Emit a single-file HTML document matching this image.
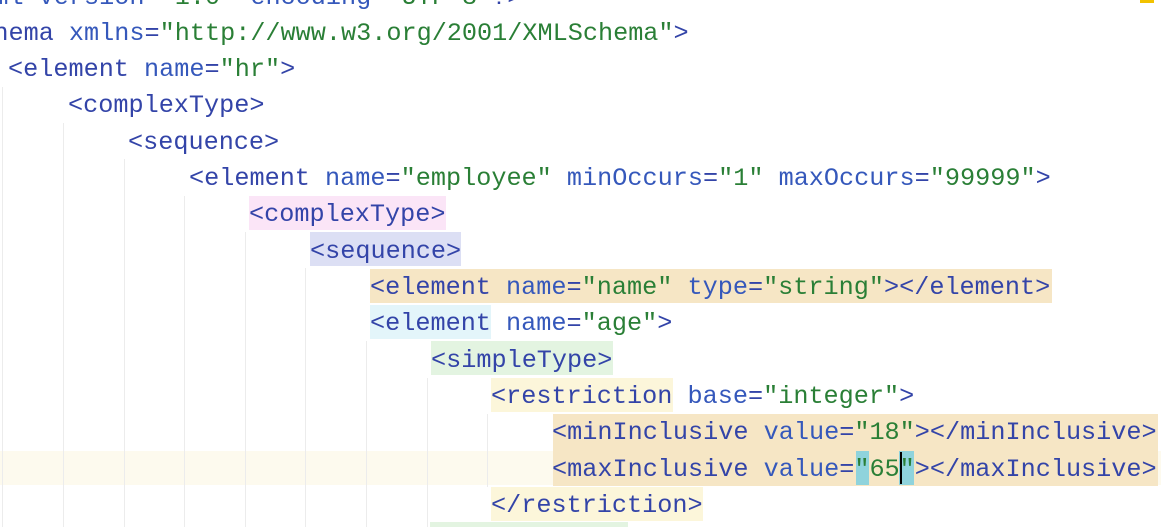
<!DOCTYPE html><html><head><style>
html{overflow:hidden;height:527px}
body{margin:0;width:1161px;height:527px;overflow:hidden;background:#fff;position:relative;font-family:"Liberation Mono","Courier New",monospace;font-size:25.2px}
.l{position:absolute;left:0;height:36.3px;line-height:36.3px;white-space:pre;color:#3344a8}
.v{color:#2a7f36}.a{color:#3558bb}
.h{position:absolute;height:34px}
.g{position:absolute;width:1px;background:#ececec}
</style></head><body>
<div class="h" style="left:0;top:451px;width:1161px;background:#fdfaee"></div>
<div class="h" style="left:249px;top:196px;width:197px;background:#fbe5f7"></div>
<div class="h" style="left:310px;top:232px;width:151px;background:#dcdff4"></div>
<div class="h" style="left:370px;top:269px;width:682px;background:#f6e6c5"></div>
<div class="h" style="left:370px;top:305px;width:121px;background:#e3f5fa"></div>
<div class="h" style="left:431px;top:341px;width:182px;background:#e3f4e1"></div>
<div class="h" style="left:491px;top:378px;width:182px;background:#fcf6da"></div>
<div class="h" style="left:553px;top:414px;width:605px;height:72px;background:#f6e6c5"></div>
<div class="h" style="left:491px;top:487px;width:212px;background:#fcf6da"></div>
<div class="h" style="left:430px;top:522px;width:198px;height:5px;background:#e3f4e1"></div>
<div class="h" style="left:856px;top:451px;width:13px;background:#8fd3dc"></div>
<div class="h" style="left:899px;top:451px;width:15px;background:#8fd3dc"></div>
<div style="position:absolute;left:900px;top:452px;width:2px;height:32px;background:#000"></div>
<div style="position:absolute;left:1140px;top:0;width:14px;height:3px;background:#f2c200"></div>
<div class="g" style="left:2px;top:87px;height:440px"></div>
<div class="g" style="left:63px;top:123px;height:404px"></div>
<div class="g" style="left:124px;top:159px;height:368px"></div>
<div class="g" style="left:184px;top:196px;height:331px"></div>
<div class="g" style="left:245px;top:232px;height:295px"></div>
<div class="g" style="left:305px;top:268px;height:259px"></div>
<div class="g" style="left:366px;top:341px;height:186px"></div>
<div class="g" style="left:427px;top:378px;height:149px"></div>
<div class="g" style="left:487px;top:414px;height:73px"></div>
<div class="l" style="top:-20px;left:-52px">&lt;?<span class="a">xml version</span>=<span class="v">"1.0"</span> <span class="a">encoding</span>=<span class="v">"UTF-8"</span>?&gt;</div>
<div class="l" style="top:16px;left:-52px">&lt;schema <span class="a">xmlns</span>=<span class="v">"http://www.w3.org/2001/XMLSchema"</span>&gt;</div>
<div class="l" style="top:52px;left:8px">&lt;element <span class="a">name</span>=<span class="v">"hr"</span>&gt;</div>
<div class="l" style="top:88px;left:68px">&lt;complexType&gt;</div>
<div class="l" style="top:125px;left:128px">&lt;sequence&gt;</div>
<div class="l" style="top:161px;left:189px">&lt;element <span class="a">name</span>=<span class="v">"employee"</span> <span class="a">minOccurs</span>=<span class="v">"1"</span> <span class="a">maxOccurs</span>=<span class="v">"99999"</span>&gt;</div>
<div class="l" style="top:197px;left:249px">&lt;complexType&gt;</div>
<div class="l" style="top:234px;left:310px">&lt;sequence&gt;</div>
<div class="l" style="top:270px;left:370px">&lt;element <span class="a">name</span>=<span class="v">"name"</span> <span class="a">type</span>=<span class="v">"string"</span>&gt;&lt;/element&gt;</div>
<div class="l" style="top:306px;left:370px">&lt;element <span class="a">name</span>=<span class="v">"age"</span>&gt;</div>
<div class="l" style="top:343px;left:431px">&lt;simpleType&gt;</div>
<div class="l" style="top:379px;left:491px">&lt;restriction <span class="a">base</span>=<span class="v">"integer"</span>&gt;</div>
<div class="l" style="top:415px;left:552px">&lt;minInclusive <span class="a">value</span>=<span class="v">"18"</span>&gt;&lt;/minInclusive&gt;</div>
<div class="l" style="top:452px;left:552px">&lt;maxInclusive <span class="a">value</span>=<span class="v">"65"</span>&gt;&lt;/maxInclusive&gt;</div>
<div class="l" style="top:488px;left:491px">&lt;/restriction&gt;</div>
</body></html>
